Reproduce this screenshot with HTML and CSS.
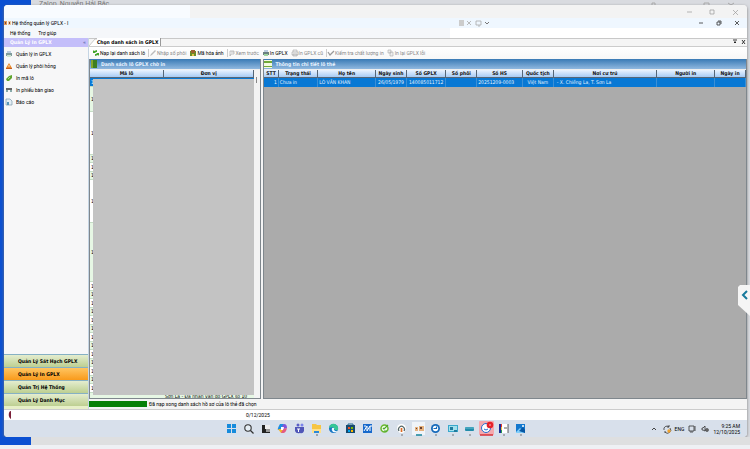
FILE: index.html
```html
<!DOCTYPE html>
<html lang="vi">
<head>
<meta charset="utf-8">
<title>Hệ thống quản lý GPLX</title>
<link rel="stylesheet" href="styles.css">
</head>
<body>
<div class="desktop-top"><span>Zalop_Nguyễn Hải Bắc</span>
  <svg class="ghost" viewBox="0 0 100 5"><path d="M2 5V3h3v2M54 5V3h5v2M78 3l3 2 3-2" fill="none" stroke="#aaa"/></svg>
</div>
<div class="window">
  <header class="outer-bar">
    <div class="outer-mask"></div>
    <svg class="caps" viewBox="0 0 54 13"><path d="M1 7h5M24 5h4v4h-4zM47 5l5 5M52 5l-5 5" fill="none" stroke="#999" stroke-width=".7"/></svg>
  </header>
  <div class="title-bar">
    <svg class="ico" viewBox="0 0 8 8"><path d="M0 2h3v4H0z" fill="#e49b5a"/><path d="M4 2h3v4H4z" fill="#efc8a0"/><path d="M1 3h1v2H1zM5 3h1v2H5z" fill="#7a4a3a"/></svg>
    <span class="title">Hệ thống quản lý GPLX - I</span>
    <svg class="session" viewBox="0 0 34 8"><path d="M1 1h5v6H1z" fill="#ccc"/><path d="M9 2l4 4M13 2L9 6M18 2h5v4h-5zM20 7h2" fill="none" stroke="#aaa" stroke-width=".8"/><path d="M27 3l2 2 2-2" fill="none" stroke="#777"/></svg>
    <svg class="caps" viewBox="0 0 54 10"><path d="M13 5h4M49 3l4 4M53 3l-4 4M31 4h3v3h-3zM32 3h3v3" fill="none" stroke="#333" stroke-width=".8"/></svg>
  </div>
  <nav class="menu"><button>Hệ thống</button><button>Trợ giúp</button></nav>
  <div class="body">
    <aside class="sidebar">
      <h2>Quản Lý In GPLX<span>«</span></h2>
      <div class="links">
        <a href="#"><svg class="ico" viewBox="0 0 8 8"><path d="M2 1h4v2H2z" fill="#bcd"/><path d="M1 3h6v3H1z" fill="#7f9b9b"/><path d="M2 5h4v2H2z" fill="#cfe3cf"/></svg>Quản lý in GPLX</a>
        <a href="#"><svg class="ico" viewBox="0 0 8 8"><path d="M4 1l3 5H1z" fill="#e8892b"/><path d="M1 6h6v1H1z" fill="#c75d20"/><path d="M4 3v2" stroke="#fff" stroke-width=".7"/></svg>Quản lý phôi hỏng</a>
        <a href="#"><svg class="ico" viewBox="0 0 8 8"><path d="M1 5l3-3 3-1v3L4 7 2 7z" fill="#5fa52d"/><path d="M3 5l2-2" stroke="#d4efb5" stroke-width=".7"/></svg>In mã lô</a>
        <a href="#"><svg class="ico" viewBox="0 0 8 8"><path d="M1 2h6v2H1z" fill="#666"/><path d="M1 4h2v2H1zM5 4h2v2H5z" fill="#8aa"/></svg>In phiếu bàn giao</a>
        <a href="#"><svg class="ico" viewBox="0 0 8 8"><path d="M1 1h4l2 2v4H1z" fill="#e4eef5" stroke="#7d9aac" stroke-width=".7"/><path d="M2 4h2v3H2z" fill="#5796b8"/></svg>Báo cáo</a>
      </div>
      <div class="groups">
        <button>Quản Lý Sát Hạch GPLX</button>
        <button class="active">Quản Lý In GPLX</button>
        <button>Quản Trị Hệ Thống</button>
        <button>Quản Lý Danh Mục</button>
      </div>
    </aside>
    <main class="content">
      <div class="tabs"><svg class="slant" viewBox="0 0 8 8"><path d="M0 8L6 1h2v7z" fill="#fff"/><path d="M0 8L6 1h2" fill="none" stroke="#aaa" stroke-width=".6"/></svg><button class="tab">Chọn danh sách in GPLX</button>
        <svg class="tabctl" viewBox="0 0 14 8"><path d="M1 2h4M2 4h2l-1 1zM10 2l3 4M13 2l-3 4" fill="#222" stroke="#222" stroke-width=".9"/></svg></div>
      <div class="toolbar">
        <button><svg class="ico" viewBox="0 0 8 8"><path d="M1 4V1l1 1 3-1v2L3 3l1 1zM7 4v3L6 6 3 7V5l2 0-1-1z" fill="#43a52b"/></svg>Nạp lại danh sách lô</button>
        <button class="off sep"><svg class="ico" viewBox="0 0 8 8"><path d="M1 7l1-2 4-4 1 1-4 4z" fill="#bbb"/></svg>Nhập số phôi</button>
        <button><svg class="ico" viewBox="0 0 8 8"><path d="M1 2h6v5H1z" fill="#6b8d28"/><path d="M2 1h4v3H2z" fill="#a06132"/><path d="M3 5h2v2H3z" fill="#e6c249"/></svg>Mã hóa ảnh</button>
        <button class="off sep"><svg class="ico" viewBox="0 0 8 8"><path d="M2 2h4v3H3L2 7zM3 3h3" fill="none" stroke="#aaa" stroke-width=".7"/></svg>Xem trước</button>
        <button><svg class="ico" viewBox="0 0 8 8"><path d="M2 1h4v2H2z" fill="#bcd"/><path d="M1 3h6v3H1z" fill="#6a8080"/><path d="M2 5h4v2H2z" fill="#9ed49e"/></svg>In GPLX</button>
        <button class="off"><svg class="ico" viewBox="0 0 8 8"><path d="M2 3V1h4v2M1 3h6v3H1zM2 5h4v2H2z" fill="#eee" stroke="#aaa" stroke-width=".6"/></svg>In GPLX cũ</button>
        <button class="off sep"><svg class="ico" viewBox="0 0 8 8"><path d="M1 3l2 3 4-4" fill="none" stroke="#999" stroke-width="1.3"/></svg>Kiểm tra chất lượng in</button>
        <button class="off"><svg class="ico" viewBox="0 0 8 8"><path d="M1 1h3v3H1zM3 3h3v4H3z" fill="#eee" stroke="#aaa" stroke-width=".6"/></svg>In lại GPLX lỗi</button>
      </div>
      <div class="panels">
        <section class="panel lots">
          <h3><svg class="ico" viewBox="0 0 8 8"><path d="M1 0h6v8H1z" fill="#3f7e20"/><path d="M1 0h2v8H1z" fill="#84a52b"/></svg>Danh sách lô GPLX chờ in</h3>
          <div class="lot-area">
            <table><thead><tr><th>Mã lô</th><th>Đơn vị</th></tr></thead>
            <tbody>
              <tr class="sel"><td>1</td><td></td></tr><tr class="h25 alt"><td>1</td><td></td></tr><tr class="h43"><td>1</td><td></td></tr>
              <tr class="alt"><td>1</td><td></td></tr><tr><td>1</td><td></td></tr><tr class="alt"><td>1</td><td></td></tr>
              <tr class="h43"><td>1</td><td></td></tr><tr class="h60 alt"><td>1</td><td></td></tr>
              <tr><td>1</td><td></td></tr><tr class="alt"><td>1</td><td></td></tr><tr><td>1</td><td></td></tr><tr class="alt"><td>1</td><td></td></tr><tr><td>1</td><td></td></tr><tr class="alt"><td>1</td><td></td></tr><tr><td>1</td><td></td></tr><tr class="alt"><td>1</td><td></td></tr><tr><td>1</td><td></td></tr><tr class="alt"><td>1</td><td></td></tr><tr><td>1</td><td></td></tr><tr class="alt"><td>1</td><td></td></tr><tr><td>1</td><td></td></tr>
              <tr class="alt"><td></td><td>Sơn La - Đã nhận vân đỗ GPLX số 10</td></tr>
            </tbody></table>
            <div class="scroll"><i></i></div>
            <div class="redact"></div>
          </div>
        </section>
        <section class="panel detail">
          <h3><svg class="ico" viewBox="0 0 8 8"><path d="M0 0h8v8H0z" fill="#f5f9df"/><path d="M0 1h8v2H0zM0 6h8v1H0z" fill="#71a938"/></svg>Thông tin chi tiết lô thẻ</h3>
          <table>
            <colgroup><col class="c15"><col class="c39"><col class="c58"><col class="c31"><col class="c39"><col class="c31"><col class="c46"><col class="c31"><col class="c104"><col class="c58"><col class="c31"></colgroup>
            <thead><tr><th>STT</th><th>Trạng thái</th><th>Họ tên</th><th>Ngày sinh</th><th>Số GPLX</th><th>Số phôi</th><th>Số HS</th><th>Quốc tịch</th><th>Nơi cư trú</th><th>Người in</th><th>Ngày in</th></tr></thead>
            <tbody><tr class="sel"><td class="r">1</td><td>Chưa in</td><td>LÒ VĂN KHAN</td><td class="m">26/05/1979</td><td class="m">140085011712</td><td></td><td>20251209-0003</td><td class="m">Việt Nam</td><td class="addr">- X. Chiềng La, T. Sơn La</td><td></td><td></td></tr></tbody>
          </table>
        </section>
      </div>
      <div class="progress"><div class="bar"></div><span>Đã nạp xong danh sách hồ sơ của lô thẻ đã chọn</span></div>
    </main>
  </div>
  <div class="status"><svg class="ico" viewBox="0 0 8 8"><path d="M5 0C2 0 2 7 5 8z" fill="#7b2039"/></svg><div class="status-mask"></div><span>0/12/2025</span></div>
  <footer class="taskbar">
    <div class="apps">
      <svg viewBox="0 0 17 17"><path d="M4 4h4v4H4zM9 4h4v4H9zM4 9h4v4H4zM9 9h4v4H9z" fill="#168bdc"/></svg>
      <svg viewBox="0 0 17 17"><circle cx="8" cy="8" r="3.2" fill="#e6eef5" stroke="#333" stroke-width="1.1"/><path d="M10.500 10.500l3 3" stroke="#333" stroke-width="1.2"/></svg>
      <svg viewBox="0 0 17 17"><path d="M7 5h6v6H7z" fill="#eee"/><path d="M5 5h3v4h5v4H5z" fill="#222"/><path d="M9 9h4v3H9z" fill="#999"/></svg>
      <svg viewBox="0 0 17 17"><path d="M6 4h4l-2 6H4Q3 9 6 4z" fill="#1c8ee0"/><path d="M10 4q3 0 3 4l-3 1-2-3z" fill="#8254d8"/><path d="M4 9h4l2 4H7z" fill="#f3b52c"/><path d="M9 9l4-1q-1 5-4 5H7z" fill="#e45a83"/><path d="M7 7h3l-1 3H7z" fill="#fff"/></svg>
      <svg viewBox="0 0 17 17"><circle cx="7" cy="5" r="1.500" fill="#5b5fc7"/><circle cx="11" cy="5" r="1.500" fill="#7b83eb"/><path d="M4 7h9v4q-1 3-4 2-4 1-5-2z" fill="#5056b8"/><path d="M6 9h3M7.500 9v3" stroke="#fff"/></svg>
      <svg viewBox="0 0 17 17"><path d="M4 4h4l1 1h4v7H4z" fill="#f6c544"/><path d="M4 9h9v4H4z" fill="#ffe08a"/><path d="M6 11h5v2H6z" fill="#2b88d8"/><path d="M8 15h2" stroke="#666"/></svg>
      <svg viewBox="0 0 17 17"><circle cx="8.500" cy="8.500" r="4.500" fill="#1574c4"/><path d="M4 8q1-5 6-4 4 2 3 6-2 1-4-1 1-3-5-1z" fill="#38c795"/><path d="M7 8q3-1 2 2 2 2 4 1-2 2-5 1-2-2-1-4z" fill="#eefaff"/></svg>
      <svg viewBox="0 0 17 17"><path d="M4 5h9v8H4z" fill="#174a70"/><path d="M6 5V4h5v1" fill="none" stroke="#246a94"/><path d="M6 7h2v2H6z" fill="#f25022"/><path d="M9 7h2v2H9z" fill="#7fba00"/><path d="M6 10h2v2H6z" fill="#00a4ef"/><path d="M9 10h2v2H9z" fill="#ffb900"/></svg>
      <svg viewBox="0 0 17 17"><path d="M4 4h9v9H4z" fill="#1769cc"/><path d="M5 11l3-5v5l3-5v5M11 6h2M5 6h2" fill="none" stroke="#fff"/></svg>
      <svg viewBox="0 0 17 17"><circle cx="8.500" cy="8.500" r="3.500" fill="#effbe8" stroke="#68b72e" stroke-width="1.500"/><path d="M12 5L8 9l-1-1M8 11h3" fill="none" stroke="#4ba62e" stroke-width="1.200"/></svg>
      <svg viewBox="0 0 17 17"><circle cx="8.500" cy="8.500" r="4.500" fill="#fff"/><path d="M6 11a3 3 0 1 1 5 0" fill="none" stroke="#566" stroke-width="1.200"/><path d="M8.500 8v4" stroke="#df6b24" stroke-width="1.700"/><path d="M8 15h2" stroke="#777"/></svg>
      <svg viewBox="0 0 17 17"><path d="M2 2h13v13H2z" fill="#f0f4f9"/><path d="M5 7h3v4H5zM9 6h5v5H9z" fill="#e6b17d"/><path d="M6 8h1v1H6zM10 7h2v2h-2z" fill="#674132"/><path d="M6 15h6" stroke="#16859a" stroke-width="1.500"/></svg>
      <svg viewBox="0 0 17 17"><circle cx="8.500" cy="8.500" r="4.500" fill="#176abb"/><circle cx="8.500" cy="8.500" r="2.700" fill="#fff"/><path d="M9.500 6.500v2h-3" fill="none" stroke="#176abb" stroke-width="1.200"/><path d="M8 15h2" stroke="#777"/></svg>
      <svg viewBox="0 0 17 17"><path d="M4 5h10v7H4z" fill="#39a8cc"/><path d="M5 6h8v5H5z" fill="#a2e0ed"/><path d="M6 7h3v3H6zM10 10h3v2h-3z" fill="#207b9d"/><path d="M8 15h2" stroke="#777"/></svg>
      <svg viewBox="0 0 17 17"><rect x="4" y="7" width="9" height="4" rx="1" fill="#218caa"/><path d="M4 8h9" stroke="#68bdd2"/><path d="M8 15h2" stroke="#777"/></svg>
      <svg viewBox="0 0 17 17"><rect x="1" y="1" width="15" height="14" rx="1" fill="#f4a9ae"/><circle cx="8" cy="8" r="4.500" fill="#fff" stroke="#236fd1"/><path d="M6 9q2 2 4 0" fill="none" stroke="#236fd1"/><circle cx="12" cy="5" r="3.300" fill="#e42129"/><path d="M12 4v2" stroke="#fff" stroke-width=".7"/><path d="M2 15h13" stroke="#d83036" stroke-width="1.500"/></svg>
      <svg viewBox="0 0 17 17"><path d="M4 4h9v9H4z" fill="#fff"/><path d="M4 4h2v9H4z" fill="#192c98"/><path d="M6 4h1v3H6z" fill="#e93931"/><path d="M6 7h1v3H6z" fill="#f1c52f"/><path d="M6 10h1v3H6z" fill="#269a51"/><path d="M13 4v9M9 8h3" stroke="#333" stroke-width=".8"/><path d="M8 15h2" stroke="#777"/></svg>
      <svg viewBox="0 0 17 17"><path d="M4 4h9v9H4z" fill="#1378ce"/><path d="M4 12l4-4 5 5H4z" fill="#81cefa"/><path d="M7 11l4-4 2 3v3z" fill="#0757a4"/><circle cx="11" cy="6" r="1" fill="#fff"/><path d="M8 15h2" stroke="#777"/></svg>
    </div>
    <div class="tray">
      <svg class="t" viewBox="0 0 10 10"><path d="M3 6l2-2 2 2" fill="none" stroke="#333" stroke-width=".9"/></svg>
      <svg class="t" viewBox="0 0 10 10"><path d="M2 6a3 3 0 0 1 5-3M8 4a3 3 0 0 1-5 4M7 1v2H5M3 9V7" fill="none" stroke="#333" stroke-width=".8"/><circle cx="7" cy="7" r="1.700" fill="#f2a22a"/></svg>
      <span>ENG</span>
      <svg class="t" viewBox="0 0 10 10"><path d="M2 2h5v5H2zM3 8h3M8 2v5" fill="none" stroke="#333" stroke-width=".8"/></svg>
      <svg class="t" viewBox="0 0 10 10"><path d="M2 4h1l2-2v5L3 6H2z" fill="none" stroke="#333" stroke-width=".8"/><circle cx="7" cy="6" r="1.700" fill="#222"/><path d="M6 6h2" stroke="#fff" stroke-width=".6"/></svg>
      <time>9:25 AM<br>12/10/2025</time>
    </div>
  </footer>
</div>
<div class="desktop-bottom"></div>
<button class="drawer" aria-label="Mở"><svg viewBox="0 0 12 32"><path d="M2 0h10v31L0 20V2z" fill="#f5f5f5"/><path d="M9 6L5 10l4 4" fill="none" stroke="#16799b" stroke-width="2"/></svg></button>
</body>
</html>
```
FILE: styles.css
```css
* { box-sizing: border-box; }
body {
  margin: 0; height: 100vh; overflow: hidden; position: relative;
  display: flex; flex-direction: column;
  font: 5px/8px Roboto, "Liberation Sans", sans-serif;
  color: #000;
  background: linear-gradient(90deg, #0b50d2 31px, #d9dbe0 31px);
}
button { font: inherit; color: inherit; border: 0; padding: 0; margin: 0; background: none; white-space: nowrap; }
a { color: inherit; text-decoration: none; }
h2, h3 { margin: 0; font-size: inherit; }
h2, h3, table, .groups button, .tab { font-family: "DejaVu Sans Condensed", "DejaVu Sans", sans-serif; }
svg { display: block; flex: none; }
.ico { width: 8px; height: 8px; }
.desktop-top { height: 5px; overflow: hidden; padding-left: 39px; color: #777; font-size: 7px; display: flex; justify-content: space-between; }
.ghost { width: 100px; height: 5px; }
.window { flex: 1; min-height: 0; margin: 0 3px 0 4px; display: flex; flex-direction: column; background: #f4f4f4; border-radius: 4px; overflow: hidden; box-shadow: 0 1px 3px #777; }
.outer-bar { height: 13px; display: flex; justify-content: space-between; background: #f3f3f3; }
.outer-mask { width: 25%; background: #f8fbff; }
.caps { width: 54px; margin-right: 7px; }
.title-bar { height: 10px; display: flex; align-items: center; background: #eff7ff; }
.title { flex: 1; line-height: 10px; }
.session { width: 34px; height: 8px; margin-right: 194px; }
.menu { height: 10px; display: flex; gap: 8px; padding-left: 6px; background: linear-gradient(90deg, #f5f7fa 60%, #fff 60%); }
.body { flex: 1; min-height: 0; display: flex; }
.sidebar { width: 85px; display: flex; flex-direction: column; background: #f7f7f8; border-right: 1px solid #c5d5e4; }
.sidebar h2 { height: 9px; padding: 0 2px 0 6px; display: flex; justify-content: space-between; background: #c4befa; color: #fff; line-height: 9px; }
.sidebar h2 span { color: #6570b0; }
.links { display: flex; flex-direction: column; gap: 4px; padding-top: 3px; flex: 1; }
.links a { display: flex; align-items: center; gap: 3px; padding-left: 1px; height: 8px; }
.groups { display: flex; flex-direction: column; padding-bottom: 3px; background: #e7efc8; }
.groups button { height: 13px; padding-left: 14px; text-align: left; font-weight: bold; background: linear-gradient(#e4edcf, #bdcf91); border-top: 1px solid #86b1c4; }
.groups .active { background: linear-gradient(#ffc561, #f99a1b); }
.content { flex: 1; min-width: 0; display: flex; flex-direction: column; background: #f4f4f4; }
.tabs { height: 9px; display: flex; align-items: flex-end; border-top: 1px solid #c8c8c8; border-bottom: 1px solid #ccc; background: #f5f5f5; }
.slant { width: 8px; height: 8px; }
.tab { height: 8px; padding-right: 2px; font-weight: bold; background: #fff; border-right: 1px solid #999; }
.tabctl { width: 14px; height: 8px; margin-left: auto; margin-right: 1px; }
.toolbar { height: 12px; display: flex; align-items: center; gap: 3px; padding-left: 3px; background: linear-gradient(#fff, #f7f7f7); }
.toolbar button { display: flex; align-items: center; }
.toolbar .off { color: #888; }
.toolbar .sep { border-left: 1px solid #ccc; }
.panels { flex: 1; min-height: 0; display: flex; gap: 2px; }
.panel { border: 1px solid #7f878d; border-top: 0; min-width: 0; display: flex; flex-direction: column; background: #ababab; }
.panel h3 { height: 11px; flex: none; display: flex; align-items: center; gap: 3px; color: #e8f3ff; background: linear-gradient(#397ab5, #90b8df); border-bottom: 1px solid #efefef; }
.lots { width: 26.200%; }
.detail { flex: 1; }
table { width: 100%; border-collapse: separate; border-spacing: 0; table-layout: fixed; }
th, td { padding: 0 1px; height: 8px; line-height: 7px; overflow: hidden; white-space: nowrap; text-align: left; }
th { text-align: center; color: #111; background: linear-gradient(#e9f3ff, #a7cbf5); border-right: 1px solid #567; border-bottom: 1px solid #567; }
.detail td { border-right: 1px solid #3b8fd6; height: 9px; }
.sel td { color: #e5f3ff; background: #0878d4; }
td.m { text-align: center; }
td.r { text-align: right; }
td.addr { padding-left: 3px; }
.c15 { width: 3%; } .c31 { width: 6.400%; } .c39 { width: 8.200%; } .c46 { width: 9.500%; } .c58 { width: 12%; } .c104 { width: 21.500%; }
.lot-area { position: relative; display: flex; flex: 1; min-height: 0; overflow: hidden; background: #fff; }
.lot-area table { flex: 1; width: auto; align-self: flex-start; }
.lots th:first-child { width: 45%; }
.lots td { border-bottom: 1px solid #c5dcc5; height: 9px; }
.lots .alt td { background: #e6f7e4; height: 8px; }
.lots .h25.alt td { height: 25px; }
.lots .h43 td { height: 43px; }
.lots .h60.alt td { height: 59px; }
.scroll { width: 6px; background: #f3f3f3; padding: 7px 2px; }
.scroll i { display: block; width: 1px; height: 6px; background: #888; }
.redact { position: absolute; left: 3px; right: 6px; top: 9px; bottom: 3px; background: #c3c3c3; }
.progress { height: 10px; display: flex; align-items: center; gap: 2px; }
.bar { width: 58px; height: 6px; background: #078007; }
.status { height: 11px; display: flex; align-items: center; border-top: 1px solid #ccc; background: #fff; }
.status .ico { margin-left: 2px; }
.status-mask { width: 232px; }
.taskbar { height: 17px; display: flex; align-items: center; background: #d8e0eb; }
.apps { display: flex; margin-left: auto; }
.apps svg { width: 17px; height: 17px; }
.tray { display: flex; align-items: center; gap: 3px; margin-left: 120px; padding-right: 7px; }
.t { width: 10px; height: 10px; }
.tray time { text-align: right; line-height: 6px; }
.desktop-bottom { height: 12px; background: linear-gradient(90deg, #0b50d2 31px, #dedfe0 31px) top / 100% 8px no-repeat, #eef0f4; }
.drawer { position: absolute; right: 0; top: 285px; width: 12px; height: 32px; }
.drawer svg { width: 12px; height: 32px; }
```
